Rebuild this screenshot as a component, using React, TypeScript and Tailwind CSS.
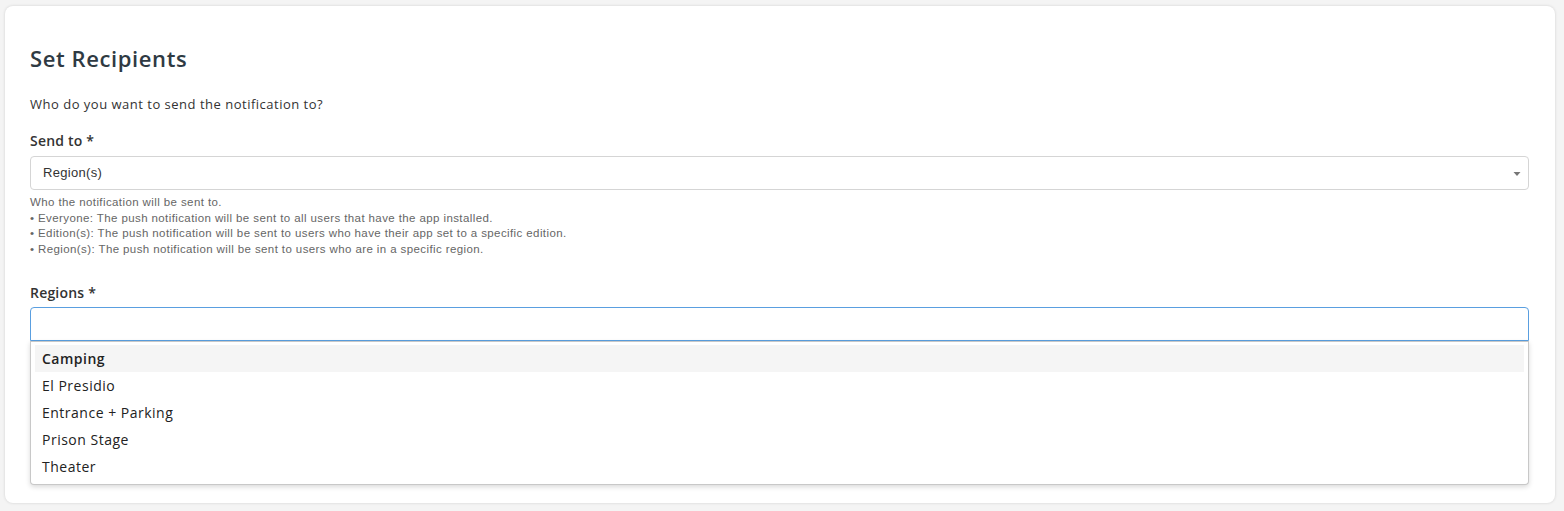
import React from "react";

const items = ["Camping", "El Presidio", "Entrance + Parking", "Prison Stage", "Theater"];

export default function App() {
  return (
    <div className="min-h-[511px] w-full bg-[#f4f4f4] pl-[5px] pr-[9px] pt-[6px] font-['Open_Sans',sans-serif]">
      <div className="relative h-[497px] rounded-[8px] bg-white pl-[25px] pr-[26px] pt-[43px] shadow-[0_0_3px_rgba(0,0,0,0.15)]">
        <h2 className="text-[22px] leading-[18px] font-semibold tracking-[0.6px] text-[#2f3a43]">Set Recipients</h2>
        <p className="mt-[29px] text-[13px] leading-[16px] tracking-[0.5px] text-[#333]">Who do you want to send the notification to?</p>

        <label className="mt-[21px] block text-[14px] leading-[16px] font-semibold tracking-[0.2px] text-[#333]">Send to *</label>
        <div className="mt-[7px] flex h-[34px] items-center justify-between rounded-[4px] border border-[#d5d5d5] bg-white pl-[12px] pr-[7px]">
          <span className="font-['Liberation_Sans',sans-serif] text-[13px] tracking-[0.3px] text-[#333]">Region(s)</span>
          <svg width="8" height="6" viewBox="0 0 8 6" className="mt-[1px]">
            <path d="M0.5 1 L7.5 1 L4 5 Z" fill="#777" />
          </svg>
        </div>
        <div className="mt-[5px] font-['Liberation_Sans',sans-serif] text-[11.5px] leading-[15.6px] tracking-[0.4px] text-[#666]">
          <div>Who the notification will be sent to.</div>
          <div>• Everyone: The push notification will be sent to all users that have the app installed.</div>
          <div>• Edition(s): The push notification will be sent to users who have their app set to a specific edition.</div>
          <div>• Region(s): The push notification will be sent to users who are in a specific region.</div>
        </div>

        <label className="mt-[28px] block text-[14px] leading-[16px] font-semibold tracking-[0.2px] text-[#333]">Regions *</label>
        <div className="relative mt-[6px]">
          <div className="h-[34px] rounded-t-[4px] border border-[#5a9fe0] bg-white" />
          <div className="absolute left-0 right-0 top-[34px] rounded-b-[4px] border border-t-0 border-[#c8c8c8] bg-white py-[4px] shadow-[0_2px_5px_rgba(0,0,0,0.15)]">
            <div className="border-t border-[#c8c8c8] -mt-[4px] mb-[3px]" />
            {items.map((it, i) => (
              <div
                key={it}
                className={`mx-[4px] flex h-[27px] items-center px-[7px] text-[14px] tracking-[0.5px] text-[#222] ${i === 0 ? "bg-[#f5f5f5] font-semibold" : ""}`}
              >
                {it}
              </div>
            ))}
          </div>
        </div>
      </div>
    </div>
  );
}
